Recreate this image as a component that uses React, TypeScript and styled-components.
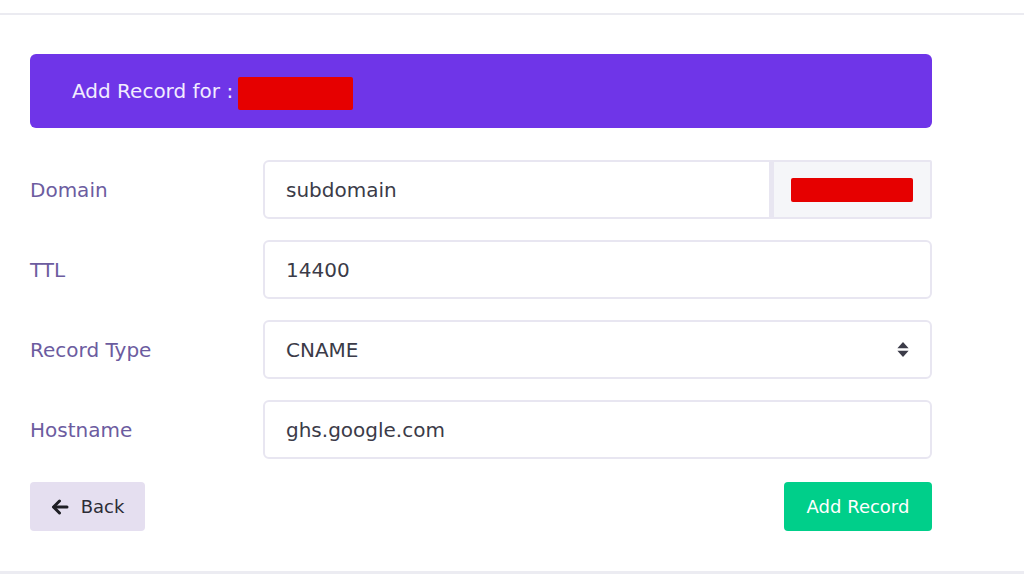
import React from "react"
import styled, { createGlobalStyle } from "styled-components"

const GlobalStyle = createGlobalStyle`
  body {
    margin: 0;
    background: #ffffff;
    font-family: "DejaVu Sans", "Open Sans", sans-serif;
  }
`

const Page = styled.div`
  display: flex;
  flex-direction: column;
  height: 574px;
  overflow: hidden;
`

const TopLine = styled.div`
  height: 13px;
  border-bottom: 2px solid #ebebf1;
`

const BottomLine = styled.div`
  height: 3px;
  background: #ececf2;
`

const Content = styled.div`
  display: flex;
  flex-direction: column;
  width: 902px;
  padding: 39px 0 0 30px;
  flex: 1;
`

const Header = styled.div`
  display: flex;
  align-items: center;
  height: 74px;
  padding-left: 42px;
  border-radius: 6px;
  background: #6f35e8;
  color: #f1ecff;
  font-size: 20px;
  margin-bottom: 32px;
`

const Redacted = styled.span<{ $w: number; $h: number }>`
  display: inline-block;
  width: ${(p) => p.$w}px;
  height: ${(p) => p.$h}px;
  background: #e60000;
  border-radius: 2px;
`

const HeaderRedacted = styled(Redacted)`
  margin-left: 5px;
  margin-top: 4px;
`

const Form = styled.form`
  display: flex;
  flex-direction: column;
  gap: 21px;
`

const Row = styled.div`
  display: grid;
  grid-template-columns: 233px 1fr;
  align-items: center;
`

const Label = styled.label`
  color: #6c5c9f;
  font-size: 20px;
`

const InputGroup = styled.div`
  display: flex;
  height: 59px;
`

const Field = styled.div<{ $joined?: boolean }>`
  flex: 1;
  display: flex;
  align-items: center;
  justify-content: space-between;
  padding: 0 21px;
  border: 2px solid #e8e6f1;
  border-radius: ${(p) => (p.$joined ? "6px 0 0 6px" : "6px")};
  color: #3b3b48;
  font-size: 20px;
  box-sizing: border-box;
`

const Addon = styled.div`
  width: 161px;
  display: flex;
  align-items: center;
  padding-left: 17px;
  box-sizing: border-box;
  background: #f5f6f9;
  border: 2px solid #e8e6f1;
  border-left-width: 3px;
  border-radius: 0 2px 2px 0;
`

const Actions = styled.div`
  display: flex;
  justify-content: space-between;
  align-items: center;
  margin-top: 2px;
`

const Button = styled.button<{ $variant: "back" | "add" }>`
  display: flex;
  align-items: center;
  justify-content: center;
  gap: 12px;
  height: 49px;
  width: ${(p) => (p.$variant === "back" ? "115px" : "148px")};
  border: none;
  border-radius: 4px;
  font-family: inherit;
  font-size: 18px;
  cursor: pointer;
  padding: 0;
  background: ${(p) => (p.$variant === "back" ? "#e5dff0" : "#00cf8a")};
  color: ${(p) => (p.$variant === "back" ? "#2c2c36" : "#ffffff")};
`

const SortIcon = () => (
  <svg width="12" height="15" viewBox="0 0 320 400" fill="#3b3b48">
    <path d="M160 0 L310 165 H10 Z" />
    <path d="M160 400 L310 235 H10 Z" />
  </svg>
)

const ArrowLeft = () => (
  <svg width="18" height="16" viewBox="0 0 18 16" fill="none" stroke="#1f1f25" strokeWidth="3" strokeLinecap="round" strokeLinejoin="round">
    <path d="M16 8 H3" />
    <path d="M8.5 2 L2.5 8 L8.5 14" />
  </svg>
)

export default function App() {
  return (
    <Page>
      <GlobalStyle />
      <TopLine />
      <Content>
        <Header>
          Add Record for : <HeaderRedacted $w={115} $h={33} />
        </Header>
        <Form onSubmit={(e) => e.preventDefault()}>
          <Row>
            <Label>Domain</Label>
            <InputGroup>
              <Field $joined>subdomain</Field>
              <Addon>
                <Redacted $w={122} $h={24} />
              </Addon>
            </InputGroup>
          </Row>
          <Row>
            <Label>TTL</Label>
            <InputGroup>
              <Field>14400</Field>
            </InputGroup>
          </Row>
          <Row>
            <Label>Record Type</Label>
            <InputGroup>
              <Field>
                CNAME
                <SortIcon />
              </Field>
            </InputGroup>
          </Row>
          <Row>
            <Label>Hostname</Label>
            <InputGroup>
              <Field>ghs.google.com</Field>
            </InputGroup>
          </Row>
          <Actions>
            <Button type="button" $variant="back">
              <ArrowLeft />
              Back
            </Button>
            <Button type="submit" $variant="add">Add Record</Button>
          </Actions>
        </Form>
      </Content>
      <BottomLine />
    </Page>
  )
}
